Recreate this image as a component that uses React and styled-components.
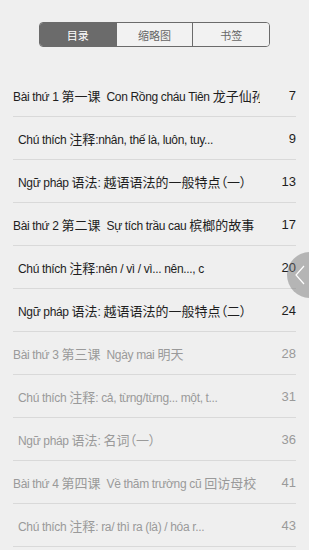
import React from "react";
import styled, { createGlobalStyle } from "styled-components";

const Global = createGlobalStyle`
  html, body { margin: 0; padding: 0; background: #efefef; }
  body { font-family: "Liberation Sans", "Noto Sans CJK SC", sans-serif; overflow: hidden; }
`;

const Page = styled.div`
  width: 309px;
  height: 550px;
  background: #efefef;
  position: relative;
  overflow: hidden;
`;

const TabsWrap = styled.div`
  display: flex;
  justify-content: center;
  padding-top: 22px;
`;

const Tabs = styled.div`
  display: flex;
  width: 231px;
  height: 25px;
  border: 1px solid #6b6b6b;
  border-radius: 4px;
  overflow: hidden;
  box-sizing: border-box;
`;

const Tab = styled.div`
  flex: 1;
  display: flex;
  align-items: center;
  justify-content: center;
  font-family: "Noto Sans CJK SC", sans-serif;
  font-size: 11px;
  color: ${(p) => (p.$active ? "#fff" : "#666")};
  background: ${(p) => (p.$active ? "#6b6b6b" : "#f2f2f2")};
  & + & { border-left: 1px solid #6b6b6b; }
`;

const List = styled.div`
  margin-top: 27px;
  padding: 0 13px;
`;

const Row = styled.div`
  display: flex;
  align-items: center;
  height: 43px;
  border-bottom: 1px solid #d9d9d9;
  box-sizing: border-box;
  font-size: 12px;
  color: ${(p) => (p.$dim ? "#9a9a9a" : "#1e1e1e")};
`;

const Title = styled.div`
  white-space: pre;
  overflow: hidden;
  letter-spacing: -0.35px;
  padding-left: ${(p) => (p.$sub ? "5px" : "0")};
  width: 247px;
  box-sizing: border-box;
`;

const Cjk = styled.span`
  font-family: "Noto Sans CJK SC", sans-serif;
  font-size: 13px;
  letter-spacing: 0;
  font-feature-settings: "palt";
`;

const Num = styled.div`
  margin-left: auto;
  text-align: right;
  font-size: 13px;
`;

const Handle = styled.div`
  position: absolute;
  left: 287px;
  top: 252px;
  width: 46px;
  height: 46px;
  border-radius: 50%;
  background: rgba(110, 110, 110, 0.45);
  display: flex;
  align-items: center;
  padding-left: 8px;
  box-sizing: border-box;
`;

const CJK_RE = /([\u3000-\u303f\u4e00-\u9fff\uff00-\uffef]+)/;

function Mixed({ text }) {
  return text
    .split(CJK_RE)
    .filter(Boolean)
    .map((part, i) => (CJK_RE.test(part) ? <Cjk key={i}>{part}</Cjk> : <span key={i}>{part}</span>));
}

const rows = [
  ["Bài thứ 1 第一课  Con Rồng cháu Tiên 龙子仙孙", "7", false, false],
  ["Chú thích 注释:nhân, thế là, luôn, tuy...", "9", true, false],
  ["Ngữ pháp 语法: 越语语法的一般特点（一）", "13", true, false],
  ["Bài thứ 2 第二课  Sự tích trầu cau 槟榔的故事", "17", false, false],
  ["Chú thích 注释:nên / vì / vì... nên..., c", "20", true, false],
  ["Ngữ pháp 语法: 越语语法的一般特点（二）", "24", true, false],
  ["Bài thứ 3 第三课  Ngày mai 明天", "28", false, true],
  ["Chú thích 注释: cả, từng/từng... một, t...", "31", true, true],
  ["Ngữ pháp 语法: 名词（一）", "36", true, true],
  ["Bài thứ 4 第四课  Về thăm trường cũ 回访母校", "41", false, true],
  ["Chú thích 注释: ra/ thì ra (là) / hóa r...", "43", true, true],
];

export default function App() {
  return (
    <Page>
      <Global />
      <TabsWrap>
        <Tabs>
          <Tab $active>目录</Tab>
          <Tab>缩略图</Tab>
          <Tab>书签</Tab>
        </Tabs>
      </TabsWrap>
      <List>
        {rows.map(([t, n, sub, dim], i) => (
          <Row key={i} $dim={dim}>
            <Title $sub={sub}>
              <Mixed text={t} />
            </Title>
            <Num>{n}</Num>
          </Row>
        ))}
      </List>
      <Handle>
        <svg width="10" height="20" viewBox="0 0 10 20">
          <path d="M9 1 L1 10 L9 19" fill="none" stroke="#fff" strokeWidth="1.2" />
        </svg>
      </Handle>
    </Page>
  );
}
